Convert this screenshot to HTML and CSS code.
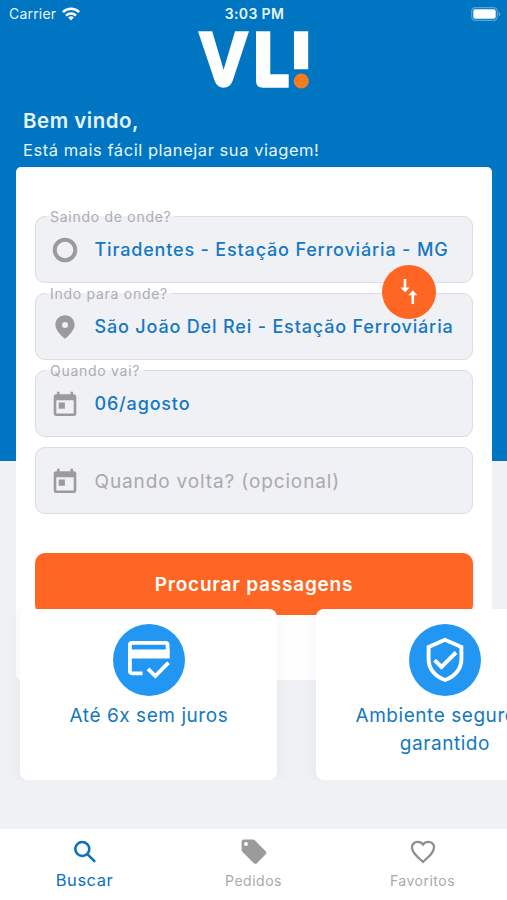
FILE: index.html
```html
<!DOCTYPE html>
<html lang="pt-BR">
<head>
<meta charset="utf-8">
<title>VLI</title>
<link rel="stylesheet" href="styles.css">
</head>
<body>
<div class="app">
  <header class="hero">
    <div class="status">
      <div class="carrier"><span>Carrier</span>
        <svg width="18" height="14" viewBox="0 0 18 14" fill="none" stroke="#fff" stroke-width="2.5"><path d="M.9 5.2a11.5 11.5 0 0 1 16.2 0M4 8.6a7.1 7.1 0 0 1 10 0"/><path d="M9 13.4 6.2 10.6a4 4 0 0 1 5.6 0z" fill="#fff" stroke="none"/></svg>
      </div>
      <span class="time">3:03 PM</span>
      <svg class="battery" width="30" height="14" viewBox="0 0 30 14"><rect x=".7" y=".7" width="25.6" height="12.6" rx="3.6" fill="none" stroke="#5aa5da" stroke-width="1.2"/><rect x="2.3" y="2.3" width="22.4" height="9.4" rx="2" fill="#fff"/><path d="M27.6 4.7v4.6q1.8-.6 1.8-2.3t-1.8-2.3" fill="#5aa5da"/></svg>
    </div>
    <svg class="logo" width="112" height="58" viewBox="0 0 112 58"><path d="M0 .3h14.2L25.600 38.800 37 .3h14L34.800 49.500Q32 56.800 25.600 56.800T16.500 49.500zM58 .3h14.300v43h18.400v13.500H65Q58 56.800 58 50zM96 .3h14.200v37.900H96z" fill="#fff"/><circle cx="103.300" cy="50" r="7.600" fill="#f47c20"/></svg>
    <h1>Bem vindo,</h1>
    <p class="lead">Está mais fácil planejar sua viagem!</p>
  </header>
  <main>
    <form class="search">
      <fieldset class="field"><legend>Saindo de onde?</legend>
        <div class="row"><svg class="ico" viewBox="0 0 30 30"><circle cx="15" cy="15" r="10.300" fill="none" stroke="#9b9b9b" stroke-width="4"/></svg><span class="value">Tiradentes - Estação Ferroviária - MG</span></div>
      </fieldset>
      <fieldset class="field"><legend>Indo para onde?</legend>
        <div class="row"><svg class="ico" viewBox="0 0 24 24"><path fill="#9b9b9b" d="M12 2.600c-4.200 0-7.700 3.300-7.700 7.500 0 5.400 7.700 11.300 7.700 11.300s7.700-5.900 7.700-11.300c0-4.200-3.500-7.500-7.700-7.500zm0 10.100a2.400 2.400 0 1 1 0-4.800 2.400 2.400 0 0 1 0 4.800z"/></svg><span class="value">São João Del Rei - Estação Ferroviária</span></div>
        <button type="button" class="swap" aria-label="Inverter"><svg width="20" height="28" viewBox="0 0 20 28" fill="none" stroke="#fff" stroke-width="2.600"><path d="M6 1v9M13.800 26V17"/><path d="m1.300 9.500 4.700 4.800 4.700-4.800zM9.100 17.300l4.700-4.800 4.700 4.800z" fill="#fff" stroke="none"/></svg></button>
      </fieldset>
      <fieldset class="field"><legend>Quando vai?</legend>
        <div class="row"><svg class="ico" viewBox="0 0 30 30"><path fill="#9b9b9b" fill-rule="evenodd" d="M7 2.700h2.500v2.500h11V2.700H23v2.500h.8q2.500 0 2.500 2.500v16.800q0 2.500-2.500 2.500H6.200q-2.500 0-2.500-2.500V7.700q0-2.500 2.500-2.500H7zM6.300 11.200v13.200h17.400V11.200zM8.700 13.500h6.200v6.200H8.700z"/></svg><span class="value">06/agosto</span></div>
      </fieldset>
      <fieldset class="field plain">
        <div class="row"><svg class="ico" viewBox="0 0 30 30"><path fill="#9b9b9b" fill-rule="evenodd" d="M7 2.700h2.500v2.500h11V2.700H23v2.500h.8q2.500 0 2.500 2.500v16.800q0 2.500-2.500 2.500H6.200q-2.500 0-2.500-2.500V7.700q0-2.500 2.500-2.500H7zM6.300 11.200v13.200h17.400V11.200zM8.700 13.500h6.200v6.200H8.700z"/></svg><span class="hint">Quando volta? (opcional)</span></div>
      </fieldset>
      <button type="button" class="submit">Procurar passagens</button>
    </form>
    <section class="perks">
      <article class="perk"><div class="disc"><svg width="42" height="42" viewBox="0 0 42 42" fill="none" stroke="#fff" stroke-width="3.800"><path d="M14.500 34.300H4q-2.100 0-2.100-2.100V6q0-2.100 2.100-2.100h33.500q2.100 0 2.100 2.100v13"/><path d="M2 10.500h39.500v9H2z" fill="#fff" stroke="none"/><path d="m20 29.800 7.300 7.300L40.500 23.700"/></svg></div><p>Até 6x sem juros</p></article>
      <article class="perk"><div class="disc"><svg width="42" height="46" viewBox="0 0 42 46" fill="none" stroke="#fff" stroke-width="3.900"><path d="M21 2.800 4.600 10v12.200C4.600 32 11.300 39.700 21 43c9.700-3.300 16.400-11 16.400-20.800V10z"/><path d="m10.600 23.200 6.800 6.800L32 15.500"/></svg></div><p>Ambiente seguro e<br>garantido</p></article>
    </section>
  </main>
  <nav>
    <a class="tab active"><svg width="26" height="26" viewBox="0 0 26 26" fill="none" stroke="#0b71bb" stroke-width="2.600"><circle cx="10.300" cy="10" r="7"/><path d="m15.300 15.100 7.800 7.800"/></svg><span>Buscar</span></a>
    <a class="tab"><svg width="26" height="26" viewBox="0 0 26 26"><path fill="#9b9b9b" fill-rule="evenodd" d="M3 .6h9q1 0 1.800.7L24.700 12.200q1.300 1.500 0 3l-8.800 9q-1.500 1.300-3 0L1.300 12.700Q.6 12 .6 11V3Q.6.6 3 .6M5 3.100a1.900 1.900 0 1 0 0 3.800 1.900 1.900 0 0 0 0-3.800"/></svg><span>Pedidos</span></a>
    <a class="tab"><svg width="26" height="26" viewBox="0 0 26 26"><path d="m13 22.900-1.500-1.400C6.300 16.900 2 13 2 8.400 2 5.200 4.500 2.800 7.700 2.800c2.100 0 4.100 1 5.300 2.800 1.200-1.800 3.200-2.800 5.300-2.800 3.200 0 5.700 2.400 5.700 5.600 0 4.600-4.300 8.500-9.500 13.100z" fill="none" stroke="#8e8e8e" stroke-width="2.200"/></svg><span>Favoritos</span></a>
  </nav>
</div>
</body>
</html>
```
FILE: styles.css
```css
* { box-sizing: border-box; }
body { margin: 0; font-family: Inter, "Liberation Sans", sans-serif; }
h1, p { margin: 0; }
button { border: 0; padding: 0; font: inherit; color: #fff; }
svg { display: block; flex: none; }

.app { height: 900px; overflow: hidden; display: flex; flex-direction: column; background: #f0f1f5; }

.hero { height: 461px; flex: none; background: #0075c1; color: #e6f5ff; }
.status { height: 28px; padding: 0 6px 0 9px; display: grid; grid-template-columns: 1fr auto 1fr; align-items: center; font-size: 14px; }
.carrier { display: flex; align-items: center; gap: 6px; margin-bottom: 1px; letter-spacing: .2px; }
.time { font-weight: 600; font-size: 14px; line-height: 16px; letter-spacing: .35px; margin-right: 1px; }
.battery { justify-self: end; margin-bottom: 1px; }
.logo { margin: 3px 0 0 198px; }
h1 { margin: 18px 0 0 23px; font-size: 20.500px; line-height: 28px; font-weight: 600; letter-spacing: .5px; white-space: nowrap; }
.lead { margin: 4px 0 0 23px; font-size: 16.500px; line-height: 22px; letter-spacing: .54px; white-space: nowrap; }

main { margin-top: -294px; }
.search { height: 513px; margin: 0 15px 0 16px; padding: 41px 19px 0; border-radius: 5px; background: #fff; }
.field { position: relative; height: 75px; margin: 0 0 2px; padding: 0; border: 1px solid #dcdde0; border-radius: 10px; background: #f0f1f5; min-width: 0; }
.field legend { height: 16px; margin-left: 10px; padding: 0 4px; font-size: 14px; line-height: 17px; letter-spacing: .72px; color: #adadb0; white-space: nowrap; }
.row { height: 51px; padding-left: 14px; display: flex; align-items: center; gap: 14.500px; white-space: nowrap; }
.ico { width: 30px; height: 30px; }
.value { font-size: 18px; font-weight: 500; letter-spacing: .83px; color: #1478c4; }
.plain { height: 67px; margin-top: 10px; }
.plain .row { height: 66px; }
.hint { font-size: 19px; letter-spacing: .87px; color: #a9a9ac; }
.swap { position: absolute; right: 36px; top: -36.500px; width: 54px; height: 54px; border-radius: 50%; background: #ff6624; display: grid; place-items: center; }
.submit { display: block; width: 100%; height: 62px; margin-top: 39px; border-radius: 10px; background: #ff6624; font-size: 19px; font-weight: 600; letter-spacing: .8px; }

.perks { position: relative; height: 171px; margin-top: -71px; padding-left: 20.400px; display: flex; gap: 39px; overflow: hidden; }
.perk { flex: none; width: 257px; height: 171px; padding-top: 15px; border-radius: 8px; background: #fff; box-shadow: 0 0 20px rgba(0, 0, 0, .05); color: #1478be; text-align: center; font-size: 19px; line-height: 28px; letter-spacing: .55px; white-space: nowrap; }
.disc { width: 72px; height: 72px; margin: 0 auto 6px; border-radius: 50%; background: #2296f3; display: grid; place-items: center; }

nav { height: 71px; margin-top: auto; flex: none; display: grid; grid-template-columns: repeat(3, 1fr); background: #fff; }
.tab { padding-top: 10px; display: flex; flex-direction: column; align-items: center; gap: 6px; font-size: 14px; line-height: 20px; letter-spacing: .5px; color: #a9a9a9; }
.active { gap: 5px; font-size: 16.500px; color: #0b71bb; }
```
